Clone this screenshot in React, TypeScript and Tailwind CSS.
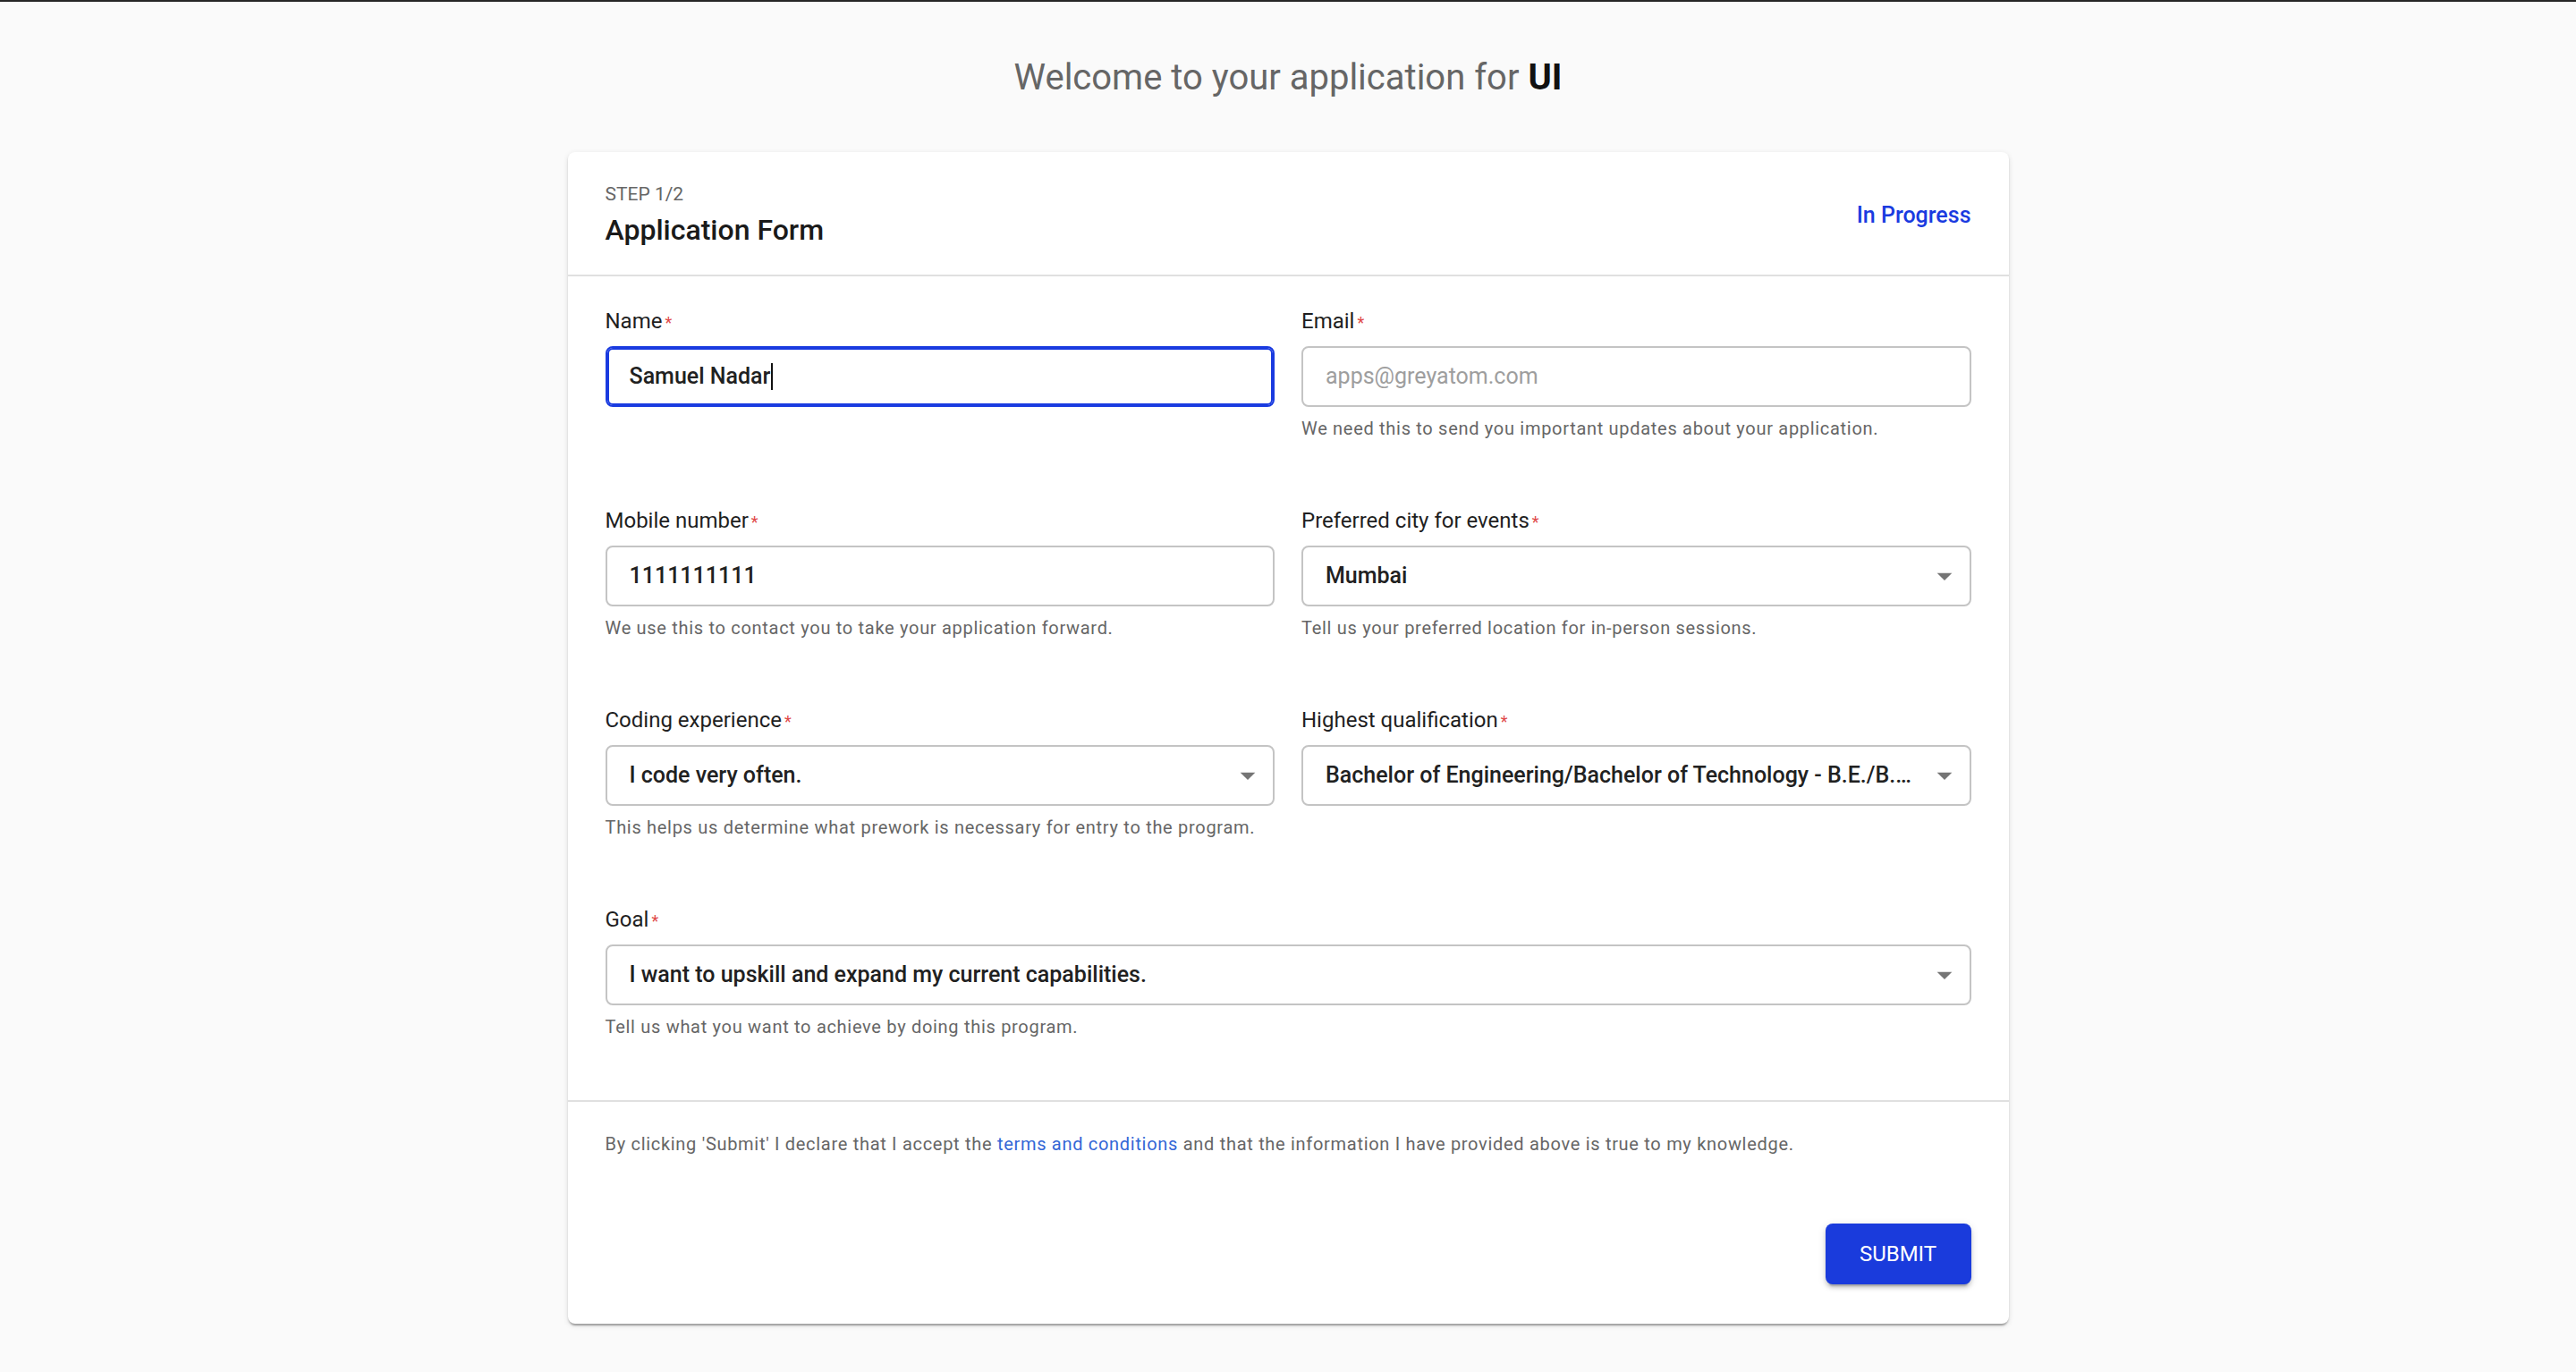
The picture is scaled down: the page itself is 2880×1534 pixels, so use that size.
import type { ReactNode } from "react";

/**
 * Application form, step 1 of 2.
 */

const font = { fontFamily: "Roboto, 'Noto Sans', sans-serif" };

function ArrowDropDown() {
  return (
    <svg viewBox="0 0 24 24" className="h-[40px] w-[40px] shrink-0 fill-[#757575]">
      <path d="M7 10l5 5 5-5z" />
    </svg>
  );
}

function Field({
  label,
  helper,
  children,
  className = "",
}: {
  label: string;
  helper?: string;
  children: ReactNode;
  className?: string;
}) {
  return (
    <div className={`flex flex-col ${className}`}>
      <div className="mb-[12px] flex h-[30px] items-baseline text-[24px] leading-[28px] text-[#1f1f1f]">
        {label}
        <span className="ml-[3px] text-[18px] text-[#e04848]">*</span>
      </div>
      {children}
      {helper && (
        <p className="mt-[12px] text-[20px] leading-[24px] tracking-[0.7px] text-[#666666]">{helper}</p>
      )}
    </div>
  );
}

function TextBox({ value, placeholder, focused }: { value?: string; placeholder?: string; focused?: boolean }) {
  return (
    <div
      className={`flex h-[68px] items-center rounded-[8px] border-2 px-[25px] text-[25px] ${
        focused
          ? "border-[#1a3be0] shadow-[inset_0_0_0_2px_#1a3be0]"
          : "border-[#c4c4c4]"
      }`}
    >
      {value ? (
        <>
          <span className="font-medium text-[#212121]">{value}</span>
          {focused && <span className="ml-[1px] h-[30px] w-[2px] bg-[#111111]" />}
        </>
      ) : (
        <span className="text-[#9e9e9e]">{placeholder}</span>
      )}
    </div>
  );
}

function SelectBox({ value }: { value: string }) {
  return (
    <div className="flex h-[68px] items-center rounded-[8px] border-2 border-[#c4c4c4] pl-[25px] pr-[8px] text-[25px]">
      <span className="min-w-0 flex-1 truncate pr-[4px] font-medium text-[#212121]">{value}</span>
      <ArrowDropDown />
    </div>
  );
}

export default function App() {
  return (
    <div className="min-h-screen bg-[#fafafa]" style={font}>
      <div className="h-[2px] bg-[#262626]" />

      <h1 className="mt-[61px] text-center text-[40px] leading-[48px] text-[#666666]">
        Welcome to your application for <span className="font-bold text-[#111111]">UI</span>
      </h1>

      <div className="mx-auto mt-[59px] w-[1611px] rounded-[8px] bg-white shadow-[0_4px_2px_-2px_rgba(0,0,0,0.2),0_2px_2px_0_rgba(0,0,0,0.14),0_2px_6px_0_rgba(0,0,0,0.12)]">
        {/* Header */}
        <div className="flex items-center justify-between px-[42px] pb-[31px] pt-[35px]">
          <div>
            <div className="text-[21px] leading-[24px] text-[#666666]">STEP 1/2</div>
            <div className="mt-[9px] text-[32px] font-medium leading-[38px] text-[#1a1a1a]">Application Form</div>
          </div>
          <div className="text-[25px] font-medium text-[#1a3be0]">In Progress</div>
        </div>

        <div className="h-[2px] bg-[#e0e0e0]" />

        {/* Form fields */}
        <div className="grid grid-cols-2 gap-x-[30px] gap-y-[77px] px-[42px] pb-[70px] pt-[36px]">
          <Field label="Name">
            <TextBox value="Samuel Nadar" focused />
          </Field>
          <Field label="Email" helper="We need this to send you important updates about your application.">
            <TextBox placeholder="apps@greyatom.com" />
          </Field>
          <Field label="Mobile number" helper="We use this to contact you to take your application forward.">
            <TextBox value="1111111111" />
          </Field>
          <Field label="Preferred city for events" helper="Tell us your preferred location for in-person sessions.">
            <SelectBox value="Mumbai" />
          </Field>
          <Field
            label="Coding experience"
            helper="This helps us determine what prework is necessary for entry to the program."
          >
            <SelectBox value="I code very often." />
          </Field>
          <Field label="Highest qualification">
            <SelectBox value="Bachelor of Engineering/Bachelor of Technology - B.E./B.Tech" />
          </Field>
          <Field
            label="Goal"
            helper="Tell us what you want to achieve by doing this program."
            className="col-span-2"
          >
            <SelectBox value="I want to upskill and expand my current capabilities." />
          </Field>
        </div>

        <div className="h-[2px] bg-[#e0e0e0]" />

        {/* Footer */}
        <div className="px-[42px] pb-[44px] pt-[35px]">
          <p className="text-[20px] leading-[24px] tracking-[0.7px] text-[#666666]">
            By clicking 'Submit' I declare that I accept the{" "}
            <a className="text-[#3367d6]">terms and conditions</a> and that the information I have provided above
            is true to my knowledge.
          </p>
          <div className="mt-[77px] flex justify-end">
            <button className="h-[68px] w-[163px] rounded-[8px] bg-[#1a3bdc] text-[24px] uppercase text-white shadow-[0_6px_2px_-4px_rgba(0,0,0,0.2),0_4px_4px_0_rgba(0,0,0,0.14),0_2px_10px_0_rgba(0,0,0,0.12)]">
              Submit
            </button>
          </div>
        </div>
      </div>
    </div>
  );
}
